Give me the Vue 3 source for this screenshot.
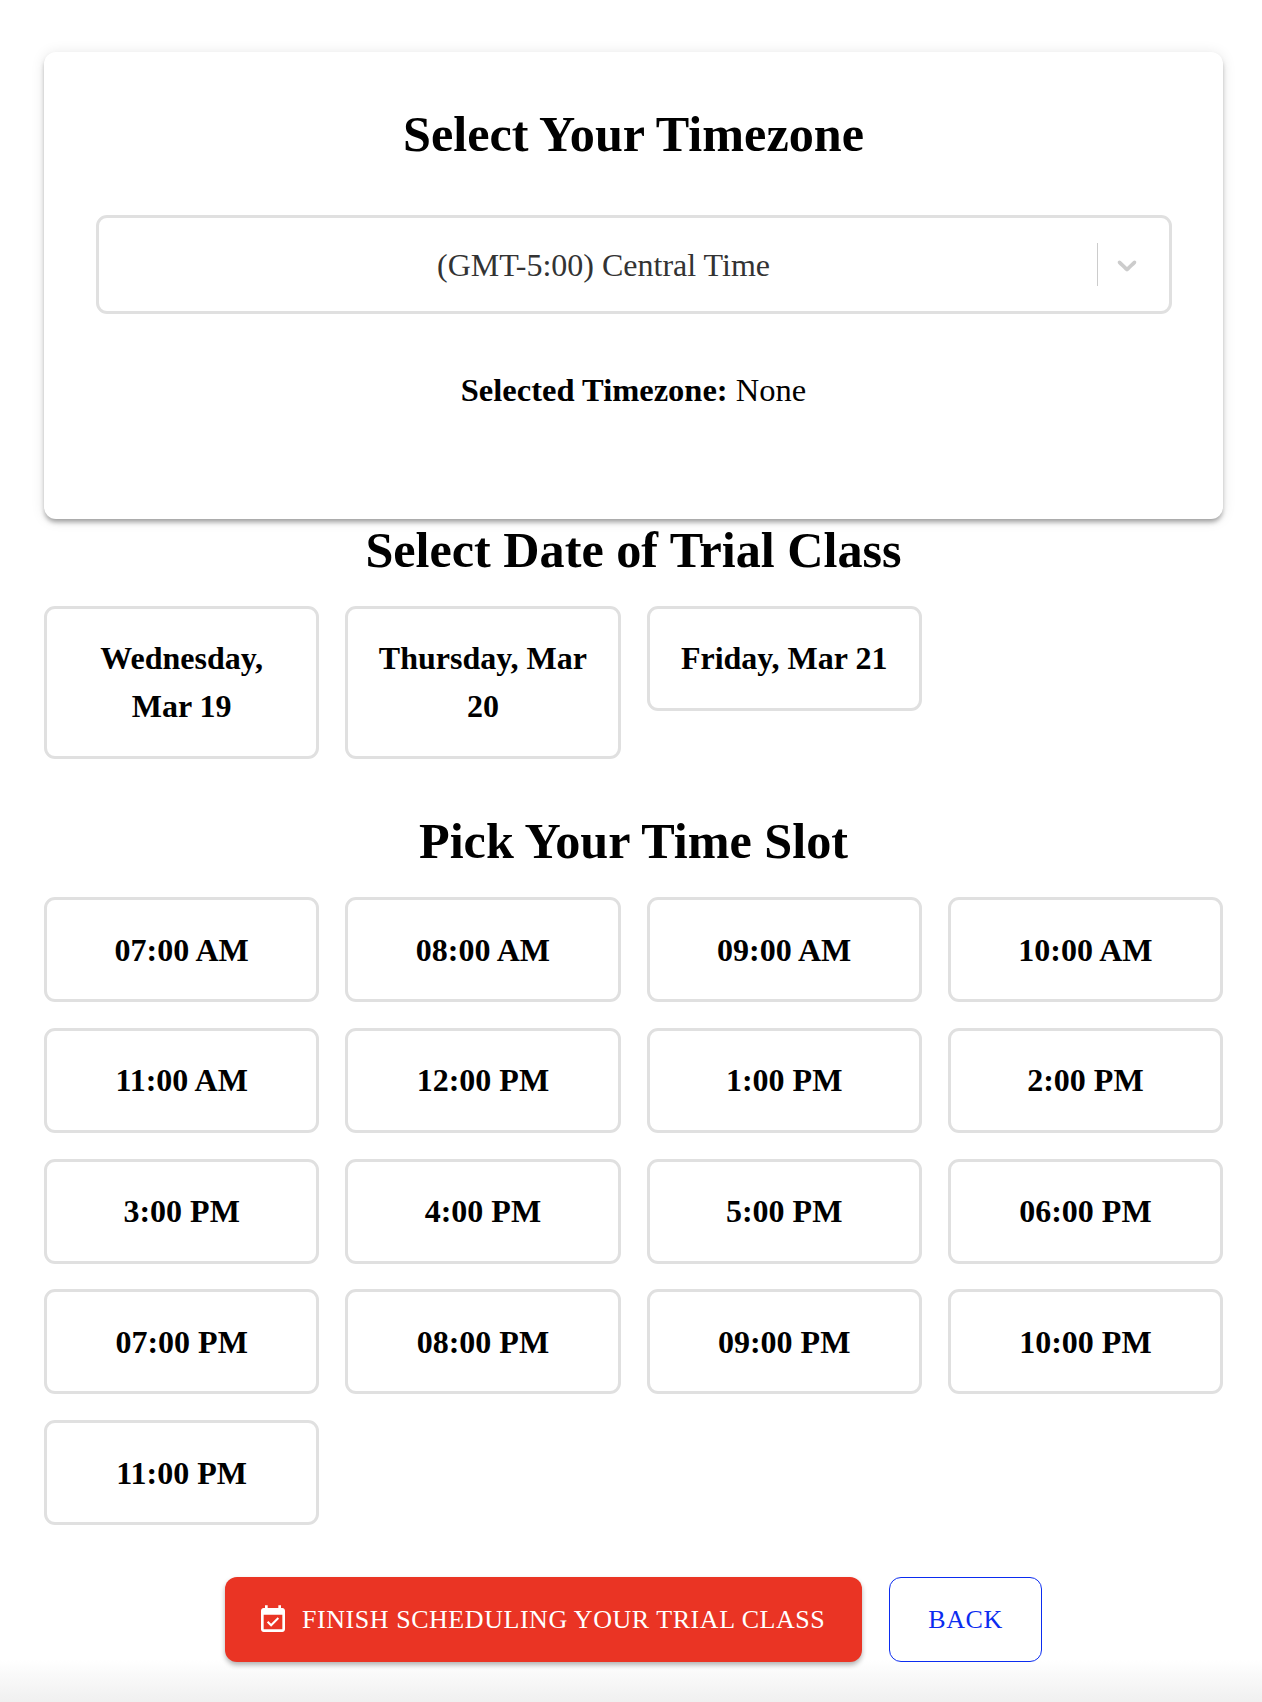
<script setup>
const dates = ["Wednesday, Mar 19", "Thursday, Mar 20", "Friday, Mar 21"];
const slots = [
  "07:00 AM", "08:00 AM", "09:00 AM", "10:00 AM",
  "11:00 AM", "12:00 PM", "1:00 PM", "2:00 PM",
  "3:00 PM", "4:00 PM", "5:00 PM", "06:00 PM",
  "07:00 PM", "08:00 PM", "09:00 PM", "10:00 PM",
  "11:00 PM"
];
</script>

<template>
  <div class="page">
    <section class="tz-card">
      <h2 class="title">Select Your Timezone</h2>
      <div class="select">
        <span class="select-value">(GMT-5:00) Central Time</span>
        <span class="select-sep"></span>
        <svg class="select-arrow" viewBox="0 0 20 20" width="32" height="32">
          <path fill="#ccc" d="M4.516 7.548c0.436-0.446 1.043-0.481 1.576 0l3.908 3.747 3.908-3.747c0.533-0.481 1.141-0.446 1.574 0 0.436 0.445 0.408 1.197 0 1.615-0.406 0.418-4.695 4.502-4.695 4.502-0.217 0.223-0.502 0.335-0.787 0.335s-0.57-0.112-0.789-0.335c0 0-4.287-4.084-4.695-4.502s-0.436-1.17 0-1.615z" />
        </svg>
      </div>
      <p class="selected"><strong>Selected Timezone:</strong> None</p>
    </section>

    <h2 class="title title-date">Select Date of Trial Class</h2>
    <div class="grid grid-start">
      <button v-for="d in dates" :key="d" class="tile">{{ d }}</button>
    </div>

    <h2 class="title title-slot">Pick Your Time Slot</h2>
    <div class="grid">
      <button v-for="s in slots" :key="s" class="tile">{{ s }}</button>
    </div>

    <div class="actions">
      <button class="btn btn-finish">
        <svg viewBox="0 0 24 24" width="32" height="32" fill="#fff">
          <path d="M16.53 11.06 15.47 10l-4.88 4.88-2.12-2.12-1.06 1.06L10.59 17l5.94-5.94zM19 3h-1V1h-2v2H8V1H6v2H5c-1.11 0-2 .9-2 2v14c0 1.1.89 2 2 2h14c1.1 0 2-.9 2-2V5c0-1.1-.9-2-2-2zm0 16H5V8h14v11z" />
        </svg>
        <span>FINISH SCHEDULING YOUR TRIAL CLASS</span>
      </button>
      <button class="btn btn-back">BACK</button>
    </div>
  </div>
</template>

<style>
html,
body {
  margin: 0;
  background: #fff;
}
</style>

<style scoped>
.page {
  box-sizing: border-box;
  height: 1702px;
  padding: 52px 39px 0 44px;
  font-family: "Liberation Serif", "Times New Roman", serif;
  color: #000;
  background: linear-gradient(to bottom, #fff 0, #fff 1660px, #f0f0f0 1702px);
}

.tz-card {
  box-sizing: border-box;
  height: 467px;
  padding: 54px 51.5px 52px;
  background: #fff;
  border-radius: 12px;
  box-shadow: 0 4px 5px -1px rgba(0, 0, 0, 0.35), 0 1px 14px rgba(0, 0, 0, 0.1);
}

.title {
  margin: 0;
  font-size: 50.2px;
  line-height: 56px;
  font-weight: 700;
  text-align: center;
}

.select {
  display: flex;
  align-items: center;
  box-sizing: border-box;
  height: 99px;
  margin-top: 53px;
  padding-right: 25.5px;
  border: 3px solid #e0e0e0;
  border-radius: 11px;
}

.select-value {
  flex: 1;
  padding: 2px 0 0 12px;
  font-size: 32px;
  color: #333;
  text-align: center;
}

.select-sep {
  width: 1px;
  height: 43px;
  margin-right: 13.5px;
  background: #ccc;
}

.selected {
  margin: 56px 0 0;
  font-size: 32.5px;
  line-height: 40px;
  text-align: center;
}

.title-date {
  margin-top: 3px;
}

.title-slot {
  margin-top: 54px;
}

.grid {
  display: grid;
  grid-template-columns: repeat(4, 1fr);
  gap: 25.75px 26px;
  margin-top: 28px;
}

.grid-start {
  align-items: start;
}

.tile {
  box-sizing: border-box;
  padding: 25.5px 30px;
  border: 3px solid #e0e0e0;
  border-radius: 11px;
  background: #fff;
  font-family: inherit;
  font-size: 32px;
  line-height: 48px;
  font-weight: 700;
  color: #000;
  text-align: center;
}

.grid-start .tile {
  padding: 25px 30px 26px;
}

.actions {
  display: flex;
  justify-content: center;
  gap: 27px;
  margin-top: 52px;
}

.btn {
  box-sizing: border-box;
  height: 85px;
  display: flex;
  align-items: center;
  border-radius: 12px;
  font-family: inherit;
  font-size: 26px;
  letter-spacing: 0.55px;
  white-space: nowrap;
}

.btn-finish {
  gap: 13px;
  width: 637px;
  padding: 0 32px;
  border: 0;
  background: #ea3424;
  color: #fff;
  box-shadow: 0 3px 5px rgba(0, 0, 0, 0.3);
}

.btn-back {
  justify-content: center;
  width: 153px;
  border: 1.5px solid #0b2cf0;
  background: transparent;
  color: #0b2cf0;
}
</style>
